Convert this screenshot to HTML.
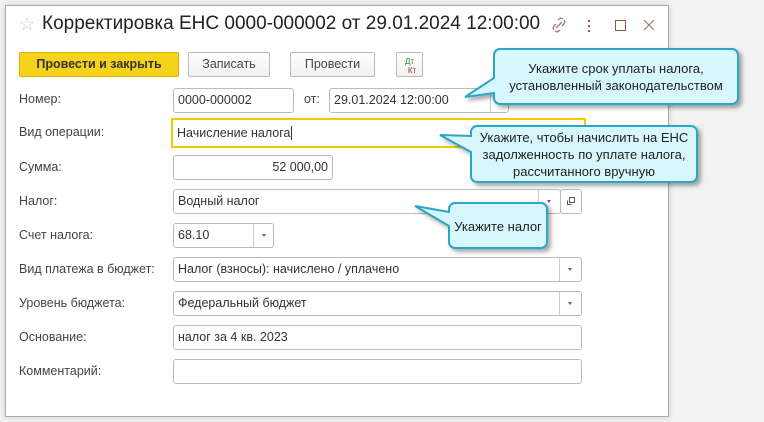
<!DOCTYPE html>
<html><head><meta charset="utf-8"><style>
*{box-sizing:border-box;margin:0;padding:0}
body{width:764px;height:422px;background:#f2f2f2;font-family:"Liberation Sans",sans-serif;position:relative;overflow:hidden;color:#333}
.win{position:absolute;left:5px;top:5px;width:664px;height:412px;background:#fff;border:1px solid #aaa;box-shadow:0 0 6px rgba(0,0,0,.15)}
.a{position:absolute}
.t{font-size:19px;color:#222;left:42px;top:13px;white-space:nowrap}
.btn{position:absolute;top:52px;height:25px;border:1px solid #bbb;border-radius:2px;background:linear-gradient(#fff,#f0f0f0);font-size:12.5px;text-align:center;line-height:23px;color:#444}
.lbl{position:absolute;left:19px;font-size:12.5px;color:#444}
.f{position:absolute;height:25px;border:1px solid #bbb;border-radius:3px;background:#fff;font-size:12.5px;line-height:23px;padding-left:4px;color:#333;white-space:nowrap}
.dd{position:absolute;top:0;right:0;width:22px;height:23px;border-left:1px solid #ccc}
.dd:after{content:"";position:absolute;left:8px;top:10px;border:2.5px solid transparent;border-top:3px solid #666}
.ct{position:absolute;font-size:13px;color:#222;text-align:center;line-height:17px}
</style></head><body>
<div class="win"></div>
<div class="a" style="left:19px;top:14px;font-size:18px;color:#ccc">☆</div>
<div class="a t">Корректировка ЕНС 0000-000002 от 29.01.2024 12:00:00</div>
<svg class="a" style="left:550px;top:16px" width="120" height="20">
<g stroke="#a08070" stroke-width="1.3" fill="none"><path d="M6 12l6-6M4 14c-2-2 0-4 2-6M14 4c2 2 0 4-2 6M5 15c2 2 4 0 5-1M13 3c-2-2-4 0-5 1"/></g>
<g fill="#a05040"><rect x="38" y="4" width="2" height="2"/><rect x="38" y="9" width="2" height="2"/><rect x="38" y="14" width="2" height="2"/></g>
<rect x="65.5" y="4.5" width="10" height="10" stroke="#a05040" fill="none"/>
<path d="M94 4l10 10M104 4l-10 10" stroke="#a08070" stroke-width="1.2"/>
</svg>
<div class="btn" style="left:19px;width:160px;background:#f5d21c;border-color:#d9b000;color:#333;font-weight:bold">Провести и закрыть</div>
<div class="btn" style="left:188px;width:82px">Записать</div>
<div class="btn" style="left:290px;width:85px">Провести</div>
<div class="btn" style="left:396px;width:27px;font-size:8px;line-height:9px;padding-top:4px"><span style="color:#2a8a2a">Дт</span><br><span style="color:#8a3a1a;padding-left:5px">Кт</span></div>

<div class="lbl" style="top:92px">Номер:</div>
<div class="f" style="left:173px;top:88px;width:121px">0000-000002</div>
<div class="a" style="left:304px;top:92px;font-size:12.5px;color:#444">от:</div>
<div class="f" style="left:329px;top:88px;width:180px">29.01.2024 12:00:00<div style="position:absolute;left:160px;top:0;width:1px;height:23px;background:#ccc"></div></div>

<div class="lbl" style="top:125px">Вид операции:</div>
<div class="f" style="left:171px;top:118px;width:415px;height:30px;border:2px solid #f5c800;border-radius:0;line-height:26px">Начисление налога<span style="border-left:1px solid #333;margin-left:1px"></span></div>

<div class="lbl" style="top:160px">Сумма:</div>
<div class="f" style="left:173px;top:155px;width:160px;text-align:right;padding-right:4px">52 000,00</div>

<div class="lbl" style="top:194px">Налог:</div>
<div class="f" style="left:173px;top:189px;width:388px">Водный налог<div class="dd"></div></div>
<div class="f" style="left:560px;top:189px;width:22px;padding:0"><svg width="20" height="23"><rect x="8.5" y="7.5" width="5" height="5" stroke="#555" fill="none"/><path d="M6.5 10.5v4h4" stroke="#555" fill="none"/></svg></div>

<div class="lbl" style="top:228px">Счет налога:</div>
<div class="f" style="left:173px;top:223px;width:101px">68.10<div class="dd" style="width:20px"></div></div>

<div class="lbl" style="top:262px">Вид платежа в бюджет:</div>
<div class="f" style="left:173px;top:257px;width:409px">Налог (взносы): начислено / уплачено<div class="dd"></div></div>

<div class="lbl" style="top:296px">Уровень бюджета:</div>
<div class="f" style="left:173px;top:291px;width:409px">Федеральный бюджет<div class="dd"></div></div>

<div class="lbl" style="top:330px">Основание:</div>
<div class="f" style="left:173px;top:325px;width:409px">налог за 4 кв. 2023</div>

<div class="lbl" style="top:364px">Комментарий:</div>
<div class="f" style="left:173px;top:359px;width:409px"></div>

<svg class="a" style="left:0;top:0" width="764" height="422">
<defs><filter id="s" x="-10%" y="-10%" width="130%" height="140%"><feDropShadow dx="3" dy="3" stdDeviation="2" flood-color="#000" flood-opacity=".35"/></filter></defs>
<g fill="#d8f6fd" stroke="#2aa6c8" stroke-width="2" filter="url(#s)">
<path d="M500 49H732a6 6 0 0 1 6 6V98a6 6 0 0 1-6 6H500a6 6 0 0 1-6-6V93L465 97L494 78V55a6 6 0 0 1 6-6Z"/>
<path d="M477 126H691a6 6 0 0 1 6 6V176a6 6 0 0 1-6 6H477a6 6 0 0 1-6-6V152L440 135L471 136V132a6 6 0 0 1 6-6Z"/>
<path d="M455 203H541a6 6 0 0 1 6 6V242a6 6 0 0 1-6 6H455a6 6 0 0 1-6-6V226L415 206L449 212V209a6 6 0 0 1 6-6Z"/>
</g></svg>
<div class="ct" style="left:494px;top:60px;width:244px">Укажите срок уплаты налога,<br>установленный законодательством</div>
<div class="ct" style="left:471px;top:129px;width:226px">Укажите, чтобы начислить на ЕНС<br>задолженность по уплате налога,<br>рассчитанного вручную</div>
<div class="ct" style="left:449px;top:218px;width:98px">Укажите налог</div>
</body></html>
